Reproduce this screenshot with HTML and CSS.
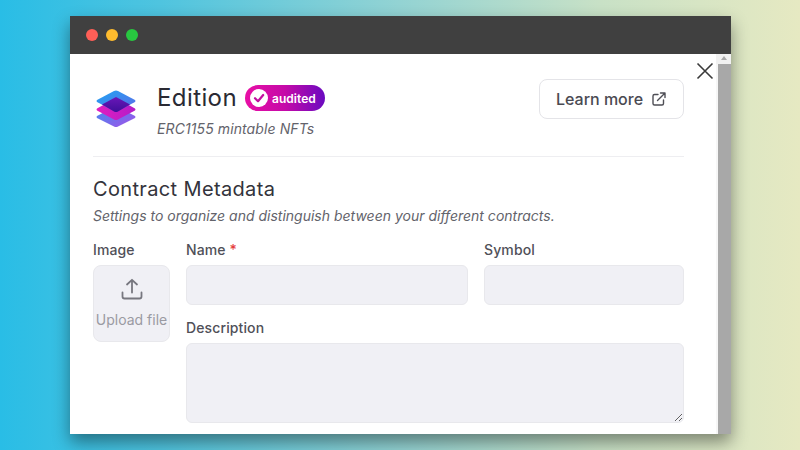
FILE: index.html
```html
<!DOCTYPE html>
<html lang="en">
<head>
<meta charset="utf-8">
<title>Edition</title>
<link rel="stylesheet" href="styles.css">
</head>
<body>
<div class="window">
  <div class="titlebar">
    <span class="dot red"></span>
    <span class="dot yellow"></span>
    <span class="dot green"></span>
  </div>
  <div class="viewport">
    <main class="content">
      <header class="head">
        <svg class="logo" viewBox="0 0 42 38" width="42" height="38">
          <defs>
            <linearGradient id="g1" x1="0" y1="0" x2="1" y2="1"><stop offset="0" stop-color="#1fa4f2"/><stop offset="1" stop-color="#5f6be8"/></linearGradient>
            <linearGradient id="g2" x1="0" y1="0" x2="1" y2="1"><stop offset="0" stop-color="#3f8df0"/><stop offset="1" stop-color="#a550e8"/></linearGradient>
            <linearGradient id="g3" x1="0" y1="0" x2="1" y2="0"><stop offset="0" stop-color="#e11ec0"/><stop offset="1" stop-color="#b41cc8"/></linearGradient>
            <linearGradient id="g4" x1="0" y1="0" x2="0" y2="1"><stop offset="0" stop-color="#6a16b8"/><stop offset="1" stop-color="#3f0f9a"/></linearGradient>
          </defs>
          <path d="M21 16 L40 26 Q41 27 40 28 L23 36.500 Q21 37.500 19 36.500 L2 28 Q1 27 2 26 Z" fill="url(#g2)"/>
          <path d="M21 8 L40 18.500 Q41 19.500 40 20.500 L23 29.500 Q21 30.500 19 29.500 L2 20.500 Q1 19.500 2 18.500 Z" fill="url(#g3)"/>
          <path d="M19 1 Q21 0 23 1 L40 10 Q41 11 40 12 L21 22 L2 12 Q1 11 2 10 Z" fill="url(#g1)"/>
          <path d="M21 7 L35 14.500 L23 21.500 Q21 22.500 19 21.500 L7 14.500 Z" fill="url(#g4)"/>
        </svg>
        <div class="head-text">
          <div class="title-row">
            <h1 class="title">Edition</h1>
            <span class="badge">
              <svg class="badge-icon" viewBox="0 0 18 18" width="18" height="18">
                <circle cx="9" cy="9" r="9" fill="#fff"/>
                <path d="M5 9.200 L8 12.200 L13.200 6" fill="none" stroke="#c2109f" stroke-width="2.200" stroke-linecap="round" stroke-linejoin="round"/>
              </svg>
              audited
            </span>
          </div>
          <p class="subtitle">ERC1155 mintable NFTs</p>
        </div>
        <a class="learn">Learn more
          <svg viewBox="0 0 16 16" width="16" height="16" fill="none" stroke="#4e4e55" stroke-width="1.400" stroke-linecap="round" stroke-linejoin="round">
            <path d="M7 3.500 H3.500 Q2 3.500 2 5 V12.500 Q2 14 3.500 14 H11 Q12.500 14 12.500 12.500 V9"/>
            <path d="M6.500 9.500 L14 2 M9.500 2 H14 V6.500"/>
          </svg>
        </a>
      </header>
      <hr class="rule">
      <h2 class="section">Contract Metadata</h2>
      <p class="hint">Settings to organize and distinguish between your different contracts.</p>
      <div class="form">
        <div class="image-col">
          <label class="label">Image</label>
          <div class="upload">
            <svg viewBox="0 0 24 24" width="24" height="24" fill="none" stroke="#77777f" stroke-width="1.800" stroke-linecap="round" stroke-linejoin="round">
              <path d="M12 15.500 V3 M7 7.500 L12 2.800 L17 7.500"/>
              <path d="M2.500 15.500 V19.500 Q2.500 21.500 4.500 21.500 H19.500 Q21.500 21.500 21.500 19.500 V15.500"/>
            </svg>
            <span>Upload file</span>
          </div>
        </div>
        <div class="fields">
          <div class="row">
            <div class="field name">
              <label class="label">Name <span class="req">*</span></label>
              <input class="input" type="text">
            </div>
            <div class="field symbol">
              <label class="label">Symbol</label>
              <input class="input" type="text">
            </div>
          </div>
          <div class="field">
            <label class="label">Description</label>
            <textarea class="input area"></textarea>
          </div>
        </div>
      </div>
    </main>
    <button class="close" aria-label="Close">
      <svg viewBox="0 0 18 18" width="18" height="18" fill="none" stroke="#3a3a3a" stroke-width="1.600"><path d="M1.500 1.500 L16.500 16.500 M16.500 1.500 L1.500 16.500"/></svg>
    </button>
    <div class="scrollbar"><span class="arrow"></span><span class="thumb"></span></div>
  </div>
</div>
</body>
</html>
```
FILE: styles.css
```css
* { box-sizing: border-box; }
html, body { margin: 0; height: 100%; }
body {
  width: 800px;
  height: 450px;
  overflow: hidden;
  padding: 16px 69px 16px 70px;
  background: linear-gradient(90deg, #29bde6 0%, #4fc4df 20%, #93d3d3 50%, #c8e1c6 75%, #e6e9c2 100%);
  font-family: Inter, "Liberation Sans", sans-serif;
  color: #26262e;
}
.window {
  height: 418px;
  display: flex;
  flex-direction: column;
  box-shadow: 0 8px 16px rgba(0, 0, 0, .42);
}
.titlebar {
  height: 38px;
  flex: none;
  background: #404040;
  display: flex;
  align-items: center;
  gap: 8px;
  padding-left: 16px;
}
.dot { width: 12px; height: 12px; border-radius: 50%; }
.red { background: #ff5f57; }
.yellow { background: #febc2e; }
.green { background: #28c840; }
.viewport {
  position: relative;
  flex: 1;
  background: #fff;
  display: flex;
  min-height: 0;
  overflow: hidden;
}
.content {
  width: 648px;
  padding: 0 34px 0 23px;
}
.head {
  height: 102px;
  display: flex;
  padding-top: 25px;
}
.logo { margin: 11px 0 0 2px; flex: none; }
.head-text { margin-left: 20px; flex: 1; }
.title-row { display: flex; align-items: center; gap: 8px; height: 36px; }
.title { margin: 0; font-size: 24px; font-weight: 400; letter-spacing: .4px; color: #2a2a33; }
.badge {
  height: 26px;
  width: 80px;
  margin-top: 2px;
  border-radius: 13px;
  background: linear-gradient(90deg, #e80fa5 0%, #c50aa8 50%, #6a0ac0 100%);
  color: #fff;
  font-size: 12px;
  font-weight: 600;
  display: flex;
  align-items: center;
  gap: 4px;
  padding-left: 5px;
  letter-spacing: .05px;
}
.subtitle { margin: 5px 0 0; font-size: 14px; font-style: italic; letter-spacing: .1px; color: #63636b; }
.learn {
  width: 145px;
  height: 40px;
  border: 1px solid #e4e4e8;
  border-radius: 8px;
  display: flex;
  align-items: center;
  justify-content: center;
  gap: 8px;
  font-size: 16px;
  font-weight: 500;
  color: #4a4a52;
}
.rule { margin: 0; border: 0; border-top: 1px solid #eeeef1; }
.section { margin: 20px 0 0; font-size: 20px; font-weight: 400; line-height: 24px; letter-spacing: .35px; color: #33333b; }
.hint { margin: 6px 0 0; font-size: 14px; font-style: italic; line-height: 18px; color: #63636b; }
.form { display: flex; gap: 16px; margin-top: 16px; }
.image-col { width: 77px; flex: none; }
.label { display: block; font-size: 14px; font-weight: 500; line-height: 17px; margin-bottom: 7px; letter-spacing: .12px; color: #505058; }
.req { color: #e53e3e; }
.upload {
  height: 77px;
  background: #f0f0f5;
  border: 1px solid #e8e8ec;
  border-radius: 8px;
  display: flex;
  flex-direction: column;
  align-items: center;
  padding-top: 11px;
  gap: 10px;
  color: #9a9aa2;
  font-size: 14px;
  white-space: nowrap;
}
.fields { flex: 1; display: flex; flex-direction: column; gap: 14px; }
.row { display: flex; gap: 16px; }
.name { width: 282px; }
.symbol { flex: 1; }
.input {
  display: block;
  width: 100%;
  height: 40px;
  background: #f0f0f5;
  border: 1px solid #e8e8ec;
  border-radius: 6px;
  padding: 0;
  margin: 0;
}
.area { height: 80px; resize: vertical; }
.close {
  position: absolute;
  top: 8px;
  left: 626px;
  padding: 0;
  border: 0;
  background: none;
  width: 18px;
  height: 18px;
  display: block;
}
.scrollbar {
  position: absolute;
  right: 0;
  top: 0;
  bottom: 0;
  width: 15px;
  display: flex;
  flex-direction: column;
  background: #f6f6f6;
}
.arrow { height: 10px; background: #f1f1f1; position: relative; }
.arrow::after {
  content: "";
  position: absolute;
  top: 2px;
  left: 5px;
  border-left: 3.500px solid transparent;
  border-right: 3.500px solid transparent;
  border-bottom: 4px solid #a8a8a8;
}
.thumb { flex: 1; margin-left: 2px; background: #a8a8a8; }
```
